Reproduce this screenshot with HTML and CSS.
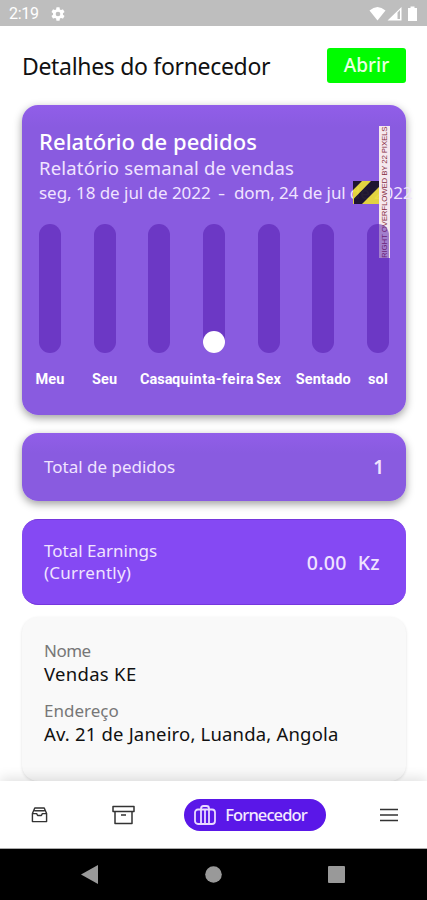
FILE: index.html
```html
<!DOCTYPE html>
<html lang="pt">
<head>
<meta charset="utf-8">
<title>Detalhes do fornecedor</title>
<link rel="stylesheet" href="styles.css">
</head>
<body>
<div class="status">
  <span class="time">2:19</span>
  <svg class="gear" width="16" height="16" viewBox="0 0 24 24"><path fill="#fff" fill-rule="evenodd" d="M19.4 13a7.500 7.500 0 0 0 0-2l2.100-1.600c.2-.2.300-.4.100-.7l-2-3.400c-.1-.2-.4-.3-.6-.2l-2.500 1a7 7 0 0 0-1.700-1L14.500 2.500A.5.500 0 0 0 14 2h-4a.5.500 0 0 0-.5.500L9.200 5.100a7 7 0 0 0-1.700 1l-2.500-1c-.2-.1-.5 0-.6.200l-2 3.400c-.1.200-.1.500.1.700L4.600 11a7.500 7.500 0 0 0 0 2l-2.100 1.600c-.2.200-.2.400-.1.700l2 3.400c.1.200.4.300.6.200l2.500-1a7 7 0 0 0 1.700 1l.3 2.600c0 .3.200.5.500.5h4c.3 0 .5-.2.500-.5l.3-2.600a7 7 0 0 0 1.700-1l2.500 1c.2.100.5 0 .6-.2l2-3.400c.1-.2.100-.5-.1-.7zM12 8.500a3.500 3.500 0 1 0 0 7 3.500 3.500 0 0 0 0-7z"/></svg>
  <svg class="signals" width="50" height="16" viewBox="0 0 50 16" fill="#fff"><path d="M0.500 4.500Q8.500-2.500 16.500 4.500L8.500 14.500z"/><path fill-rule="evenodd" d="M18.500 14.500L32.500 1v13.500zM28.500 6.500v6.500h2.500V4z"/><path d="M39 2h2.500V.5h4V2H48v13H39z"/></svg>
</div>
<main class="page">
  <header class="head"><h1>Detalhes do fornecedor</h1><button class="open">Abrir</button></header>
  <section class="card report">
    <h2>Relatório de pedidos</h2>
    <p class="sub">Relatório semanal de vendas</p>
    <p class="dates"><span class="from">seg, 18 de jul de 2022</span><span class="dash">-</span><span class="to">dom, 24 de jul de 2022</span></p>
    <div class="overflow">
      <svg width="26" height="23" viewBox="0 0 26 23"><path fill="#e9dc36" d="M0 0h26v23H0z"/><path fill="#171024" d="M0 0h9L0 9zM18 0h8v6L9 23H1v-5.500z"/></svg>
      <span class="warning">RIGHT OVERFLOWED BY 22 PIXELS</span>
    </div>
    <div class="chart">
      <div class="day"><i></i><b>Meu</b></div>
      <div class="day"><i></i><b>Seu</b></div>
      <div class="day"><i></i><b class="casa">Casa</b></div>
      <div class="day"><i class="dot"></i><b class="quinta">quinta-feira</b></div>
      <div class="day"><i></i><b>Sex</b></div>
      <div class="day"><i></i><b>Sentado</b></div>
      <div class="day"><i></i><b>sol</b></div>
    </div>
  </section>
  <section class="card orders"><span class="label">Total de pedidos</span><strong class="count">1</strong></section>
  <section class="card earnings"><span class="label">Total Earnings<br><span class="currently">(Currently)</span></span><strong class="amount">0.00 &nbsp;Kz</strong></section>
  <section class="card details">
    <p class="key k1">Nome</p><p class="value v1">Vendas KE</p>
    <p class="key k2">Endereço</p><p class="value v2">Av. 21 de Janeiro, Luanda, Angola</p>
  </section>
</main>
<nav class="tabs">
  <svg class="inbox" width="18" height="18" viewBox="0 0 18 18"><path d="M1.500 7.500L4 1.500h10l2.500 6v8.500h-15zM1.500 7.500h4.500l1 2h4l1-2h4.500M3.500 4.500h11"/></svg>
  <svg class="archive" width="23" height="20" viewBox="0 0 23 20"><path d="M1 1.500h21v5H1zM3 6.500v12h17v-12M9 10h5"/></svg>
  <div class="active"><svg width="22" height="20" viewBox="0 0 22 20"><rect x="1" y="4.500" width="20" height="14.500" rx="3"/><path d="M7 19V3.500Q7 1 9.500 1h3Q15 1 15 3.500V19M11 5v14"/></svg><span>Fornecedor</span></div>
  <svg class="menu" width="18" height="14" viewBox="0 0 18 14"><path d="M0 1.500h18M0 7h18M0 12.500h18"/></svg>
</nav>
<div class="system">
  <svg width="17" height="19" viewBox="0 0 17 19"><path d="M0 9.500L17 0v19z"/></svg>
  <svg width="17" height="17" viewBox="0 0 17 17"><circle cx="8.500" cy="8.500" r="8.300"/></svg>
  <svg width="17" height="17" viewBox="0 0 17 17"><rect width="17" height="17" rx="1"/></svg>
</div>
</body>
</html>
```
FILE: styles.css
```css
* { box-sizing: border-box; margin: 0; padding: 0; }
body { width: 427px; height: 900px; overflow: hidden; display: flex; flex-direction: column; background: #fff; font-family: "Noto Sans", sans-serif; font-weight: 400; }
svg { display: block; flex: none; }
.status { height: 26px; flex: none; background: #bebebe; display: flex; align-items: center; padding: 2px 8px 0 9px; color: #fff; }
.time { font: 16px/20px Roboto, sans-serif; letter-spacing: -.3px; width: 41px; }
.signals { margin-left: auto; }
.page { height: 755px; flex: none; overflow: hidden; padding: 22px 21px 0 22px; }
.head { height: 35px; display: flex; justify-content: space-between; margin-bottom: 22px; }
h1 { font-size: 23px; line-height: 36px; font-weight: 400; letter-spacing: -.32px; color: #111; white-space: nowrap; }
.open { width: 79px; height: 35px; border: 0; border-radius: 3px; background: #00fc00; color: #e9ffe2; font: 500 19px/33px "Noto Sans", sans-serif; }
.card { border-radius: 16px; color: #f0e3ff; }
.report { position: relative; height: 310px; padding: 22px 17px 0; background: linear-gradient(#915ee9, #895be0 22px); box-shadow: 0 3px 8px rgba(0,0,0,.38); margin-bottom: 18px; }
h2 { font-size: 22px; line-height: 28px; font-weight: 500; letter-spacing: .05px; color: #fff; white-space: nowrap; }
.sub { font-size: 18.500px; line-height: 26px; letter-spacing: .18px; white-space: nowrap; }
.dates { display: flex; font-size: 17px; line-height: 23px; white-space: nowrap; }
.dates span { flex: none; }
.from { width: 179px; letter-spacing: -.04px; }
.dash { width: 16px; transform: scaleX(1.300); transform-origin: left; }
.to { letter-spacing: -.12px; }
.overflow { position: absolute; left: 331px; top: 21px; width: 37px; height: 132px; display: flex; align-items: center; }
.overflow svg { opacity: .93; }
.warning { width: 11px; height: 132px; background: #f5e8ee; color: #862c43; font: 400 7.900px/11px "Liberation Sans", sans-serif; letter-spacing: -.16px; writing-mode: vertical-rl; transform: rotate(180deg); white-space: nowrap; }
.chart { position: relative; display: flex; justify-content: space-between; margin-top: 20px; }
.day { width: 22px; display: flex; flex-direction: column; align-items: center; }
.day i { width: 22px; height: 129px; border-radius: 11px; background: rgba(80,21,170,.5); display: flex; align-items: flex-end; }
.dot::after { content: ""; width: 22px; height: 22px; border-radius: 50%; background: #fff; }
.day b { font: 700 14.500px/20px Roboto, sans-serif; letter-spacing: .2px; color: #fff; margin-top: 17px; white-space: nowrap; }
.day .casa { padding-right: 6px; letter-spacing: 0; }
.day .quinta { letter-spacing: .5px; padding-right: 2px; }
.orders, .earnings { display: flex; align-items: center; justify-content: space-between; padding: 0 22px; }
.orders { height: 68px; background: linear-gradient(#915ee9, #895be0 20px); box-shadow: 0 3px 8px rgba(0,0,0,.38); margin-bottom: 18px; }
.earnings { height: 86px; background: #8549f3; margin-bottom: 12px; padding-right: 26px; border-top: 1px solid #7637dd; border-bottom: 1px solid #7637dd; }
.label { font-size: 17px; line-height: 22px; }
.currently { letter-spacing: .25px; }
.count { font-size: 19px; font-weight: 600; }
.amount { font-size: 19.500px; font-weight: 500; letter-spacing: .35px; }
.details { height: 164px; background: #f9f9f9; padding: 22px; box-shadow: 0 1px 3px rgba(0,0,0,.12); }
.key { color: #777; font-size: 17px; line-height: 24px; }
.k1 { letter-spacing: -.5px; }
.value { color: #111; font-size: 18.500px; line-height: 22px; letter-spacing: .18px; white-space: nowrap; }
.v1 { letter-spacing: .3px; }
.k2 { margin-top: 14px; }
.tabs { position: relative; height: 68px; flex: none; background: #fff; box-shadow: 0 -3px 12px rgba(0,0,0,.12); display: flex; align-items: center; justify-content: space-between; padding: 0 29px 0 31px; border-bottom: 1px solid #aaa; }
.tabs svg { fill: none; stroke: #333; stroke-width: 1.500; stroke-linejoin: round; }
.tabs .inbox { width: 17px; }
.archive { margin-left: 14px; }
.active { width: 142px; height: 32px; border-radius: 16px; background: #5a17e8; display: flex; align-items: center; gap: 9px; padding-left: 10px; margin-right: 4px; color: #f4e9ff; font-size: 16.500px; letter-spacing: -.9px; font-weight: 500; }
.active svg { stroke: #e9d9ff; stroke-width: 1.800; }
.system { flex: 1; background: #000; display: flex; align-items: center; justify-content: space-between; padding: 0 82px 0 81px; }
.system svg { fill: #999; }
```
